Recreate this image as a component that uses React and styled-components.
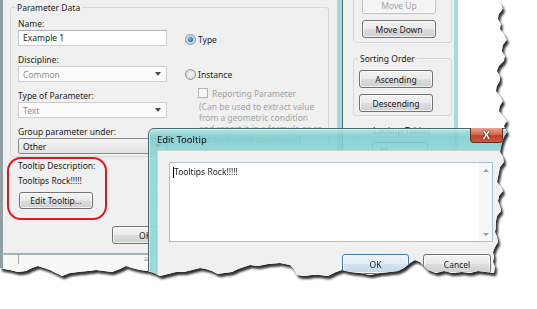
import React from "react";
import styled, { createGlobalStyle } from "styled-components";

const RIGHT_EDGE = [[497,0],[501,4],[503,9],[499,14],[498,19],[501,24],[500,29],[504,34],[507,40],[503,45],[502,51],[505,56],[504,61],[499,66],[497,71],[500,76],[500,81],[497,86],[496,91],[500,96],[503,101],[500,106],[499,111],[503,116],[507,121],[504,126],[507,132],[504,137],[502,142],[501,147],[500,152],[503,157],[504,162],[500,167],[499,172],[498,177],[497,182],[501,187],[503,191],[499,196],[498,201],[500,206],[501,211],[497,216],[496,221],[496,227],[495,232],[497,237],[498,242],[495,247],[493,252],[494,257],[493,262],[495,267],[494,273]];
const BOTTOM_EDGE = [[486,272],[478,271],[470,273],[462,272],[452,273],[444,271],[436,273],[428,270],[424,266],[420,262],[415,260],[410,263],[404,268],[398,271],[390,272],[380,273],[370,275],[360,273],[350,272],[342,270],[336,272],[328,276],[320,275],[312,275],[304,276],[297,275],[293,268],[290,265],[280,263],[268,264],[258,266],[250,265],[244,267],[238,269],[232,272],[224,273],[218,274],[212,271],[206,269],[200,268],[192,270],[184,272],[176,272],[168,274],[160,276],[154,273],[148,271],[140,270],[132,268],[126,266],[120,269],[112,272],[104,271],[96,270],[88,271],[78,272],[70,273],[62,276],[56,273],[50,270],[44,268],[38,266],[32,268],[26,271],[18,272],[10,270],[4,269],[0,268]];
const TORN = ["0px 0px", ...RIGHT_EDGE.concat(BOTTOM_EDGE).map(([x, y]) => `${x}px ${y}px`)].join(", ");

const Global = createGlobalStyle`
  html, body { margin: 0; padding: 0; background: #fff; }
  body { width: 537px; height: 309px; overflow: hidden; font-family: "Noto Sans", "Open Sans", sans-serif; }
  * { box-sizing: border-box; }
`;

const Stage = styled.div`
  width: 537px;
  height: 309px;
  filter: drop-shadow(2px 3px 1.3px rgba(0, 0, 0, 0.82));
`;

const Paper = styled.div`
  position: relative;
  width: 512px;
  height: 282px;
  overflow: hidden;
  background: #fff;
  clip-path: polygon(${TORN});
  font-size: 8.5px;
  color: #1b1b1b;
`;

/* ---------- generic controls ---------- */
const Button = styled.div`
  width: ${(p) => p.$w}px;
  height: ${(p) => p.$h || 18}px;
  display: flex;
  align-items: center;
  justify-content: center;
  font-size: 8.5px;
  color: ${(p) => (p.$disabled ? "#a4a4a4" : "#1b1b1b")};
  border: 1px solid ${(p) => (p.$default ? "#3d80b3" : p.$disabled ? "#bcc0c3" : "#737373")};
  border-radius: 3px;
  background: ${(p) =>
    p.$disabled
      ? "#f4f4f4"
      : p.$default
      ? "linear-gradient(#eef5fa 0%, #e3edf5 48%, #d3e2ee 52%, #c6d8e8 100%)"
      : "linear-gradient(#f3f3f3 0%, #ebebeb 48%, #dddddd 52%, #cfcfcf 100%)"};
  box-shadow: inset 0 0 0 1px rgba(255, 255, 255, 0.7);
  flex: none;
`;

const Label = styled.div`
  line-height: 12px;
  height: 12px;
  white-space: nowrap;
  color: ${(p) => (p.$muted ? "#a2a2a2" : "#1b1b1b")};
`;

const TextBox = styled.div`
  width: 149px;
  height: 16px;
  background: #fff;
  border: 1px solid #c9d0d6;
  border-top-color: #abb1b8;
  padding-left: 4px;
  line-height: 14px;
`;

const Combo = styled.div`
  width: 149px;
  height: 16px;
  display: flex;
  align-items: center;
  justify-content: space-between;
  padding: 0 5px 0 4px;
  border: 1px solid ${(p) => (p.$enabled ? "#8c8c8c" : "#cdcdcd")};
  border-radius: ${(p) => (p.$enabled ? "2px" : "0")};
  background: ${(p) => (p.$enabled ? "linear-gradient(#f4f4f4, #e2e2e2)" : "#fbfbfb")};
  color: ${(p) => (p.$enabled ? "#1b1b1b" : "#8f8f8f")};
`;

const Arrow = styled.span`
  width: 0;
  height: 0;
  border-left: 3.5px solid transparent;
  border-right: 3.5px solid transparent;
  border-top: 4px solid #4d4d4d;
`;

const Field = styled.div`
  display: flex;
  flex-direction: column;
  margin-bottom: ${(p) => (p.$last ? 0 : 8)}px;
`;

const Radio = styled.span`
  width: 11px;
  height: 11px;
  border-radius: 50%;
  border: 1px solid #8d8f90;
  background: radial-gradient(circle at 50% 50%, #f6f6f6, #d6d6d6);
  display: inline-flex;
  align-items: center;
  justify-content: center;
  flex: none;
  &::after {
    content: "";
    display: ${(p) => (p.$checked ? "block" : "none")};
    width: 5px;
    height: 5px;
    border-radius: 50%;
    background: radial-gradient(circle at 40% 35%, #6bbcf2, #0b4c8c);
    box-shadow: 0 0 0 1px #9ad0f2;
  }
`;

const Check = styled.span`
  width: 10px;
  height: 10px;
  border: 1px solid #b4b4b4;
  background: #f5f5f5;
  flex: none;
`;

const OptRow = styled.div`
  display: flex;
  align-items: center;
  gap: ${(p) => p.$gap || 2}px;
  height: 12px;
  margin-top: ${(p) => p.$mt || 0}px;
  margin-left: ${(p) => p.$ml || 0}px;
  white-space: nowrap;
  color: ${(p) => (p.$muted ? "#a2a2a2" : "#1b1b1b")};
`;

const Note = styled.div`
  margin: 2px 0 0 14px;
  line-height: 11px;
  color: #a4a4a4;
  white-space: nowrap;
`;

/* ---------- Parameter Properties window ---------- */
const ParamWindow = styled.div`
  position: absolute;
  left: 0;
  top: -20px;
  width: 342px;
  height: 275px;
  display: flex;
  flex-direction: column;
  border-left: 3px solid #919fa3;
  border-right: 5px solid #a3dbdb;
  border-bottom: 2px solid #9bb5b9;
  box-shadow: 1px 0 0 #56686a;
  z-index: 2;
`;

const ParamClient = styled.div`
  flex: 1;
  background: #f0f0f0;
  padding: 23px 0 0 7px;
  display: flex;
  flex-direction: column;
  align-items: flex-start;
`;

const GroupBox = styled.fieldset`
  margin: 0;
  width: ${(p) => p.$w}px;
  padding: ${(p) => p.$pad};
  border: 1px solid #d3d9dd;
  border-radius: 3px;
  margin-top: ${(p) => p.$mt || 0}px;
  min-width: 0;
`;

const Legend = styled.legend`
  padding: 0 2px;
  margin-left: ${(p) => p.$ml || 0}px;
  line-height: 9px;
  font-size: 8.5px;
  color: #1b1b1b;
`;

const DataGrid = styled.div`
  display: grid;
  grid-template-columns: 149px auto;
  column-gap: 18px;
  padding-top: 6px;
  align-items: start;
`;

const Column = styled.div`
  display: flex;
  flex-direction: column;
`;

const TooltipBox = styled.div`
  margin: 0 0 0 -3px;
  width: 100px;
  border: 2px solid #e5171d;
  border-radius: 14px;
  padding: 1px 0 9px 9px;
  display: flex;
  flex-direction: column;
`;

const TooltipLabel = styled.div`
  line-height: 12px;
  margin-top: ${(p) => p.$mt || 0}px;
  white-space: nowrap;
`;

const ButtonRow = styled.div`
  display: flex;
  gap: ${(p) => p.$gap || 8}px;
  margin: ${(p) => p.$m};
  justify-content: ${(p) => p.$justify || "flex-start"};
  align-self: stretch;
`;

/* ---------- Family Types window (behind) ---------- */
const FamilyWindow = styled.div`
  position: absolute;
  left: 343px;
  top: -30px;
  width: 115px;
  height: 330px;
  background: #f0f0f0;
  border-right: 4px solid #a7dcdc;
  padding-left: 10px;
  display: flex;
  flex-direction: column;
  z-index: 1;
`;

const StackCol = styled.div`
  display: flex;
  flex-direction: column;
  gap: 6px;
`;

/* ---------- Revit palette strip at the bottom ---------- */
const BackPanel = styled.div`
  position: absolute;
  left: 0;
  top: 255px;
  width: 152px;
  height: 30px;
  background: #f8f8f8;
  border-left: 3px solid #939fa2;
  display: flex;
  justify-content: space-between;
  align-items: flex-start;
  padding: 0 3px 0 15px;
  z-index: 0;
`;

const PanelLine = styled.span`
  width: 1px;
  height: 9px;
  background: #a9a9a9;
`;

const Grip = styled.span`
  font-size: 8px;
  line-height: 8px;
  color: #8a8a8a;
`;

/* ---------- Edit Tooltip dialog ---------- */
const Dialog = styled.div`
  position: absolute;
  left: 148px;
  top: 128px;
  width: 366px;
  height: 160px;
  border: 1px solid #48696d;
  border-radius: 6px 6px 0 0;
  padding: 0 8px;
  display: flex;
  flex-direction: column;
  background: linear-gradient(
    180deg,
    rgba(176, 228, 228, 0.92) 0px,
    rgba(126, 204, 205, 0.88) 7px,
    rgba(134, 208, 209, 0.88) 18px,
    rgba(146, 214, 214, 0.94) 24px,
    rgba(150, 216, 216, 0.96) 100%
  );
  box-shadow: inset 1px 1px 0 rgba(255, 255, 255, 0.5);
  z-index: 5;
`;

const TitleBar = styled.div`
  height: 21px;
  display: flex;
  justify-content: space-between;
  align-items: flex-start;
  flex: none;
`;

const Title = styled.div`
  margin-top: 5px;
  font-size: 9.5px;
  line-height: 12px;
  color: #0d0d0d;
`;

const CloseButton = styled.div`
  width: 33px;
  height: 15px;
  margin: -1px 2px 0 0;
  border: 1px solid #6a2a22;
  border-top: none;
  border-radius: 0 0 4px 4px;
  background: linear-gradient(180deg, #e9a493 0%, #d46a53 45%, #c1402a 55%, #cf5a3d 100%);
  display: flex;
  align-items: center;
  justify-content: center;
  color: #fff;
  font-family: "Liberation Sans", Arial, sans-serif;
  font-weight: bold;
  font-size: 11px;
  text-shadow: 0 0 1px #5a1810, 0 0 2px #5a1810;
`;

const DialogBody = styled.div`
  flex: 1;
  background: #f0f0f0;
  border: 1px solid #c1d8d9;
  padding: 11px 11px 0 11px;
  display: flex;
  flex-direction: column;
`;

const TextArea = styled.div`
  height: 80px;
  border: 1px solid #a9c0d6;
  background: #fff;
  display: flex;
`;

const TextContent = styled.div`
  flex: 1;
  padding: 3px 3px;
  line-height: 12px;
  display: flex;
  align-items: flex-start;
  color: #1b1b1b;
`;

const Caret = styled.span`
  width: 1px;
  height: 11px;
  margin-top: 1px;
  background: #000;
`;

const ScrollBar = styled.div`
  width: 13px;
  background: #f7f7f7;
  display: flex;
  flex-direction: column;
  justify-content: space-between;
  align-items: center;
  padding: 6px 0 5px;
`;

const ScrollArrow = styled.span`
  width: 0;
  height: 0;
  border-left: 3px solid transparent;
  border-right: 3px solid transparent;
  ${(p) => (p.$up ? "border-bottom: 3px solid #9a9a9a;" : "border-top: 3px solid #9a9a9a;")}
`;

export default function App() {
  return (
    <>
      <Global />
      <Stage>
        <Paper>
          <BackPanel>
            <PanelLine />
            <Grip>≡</Grip>
          </BackPanel>

          <FamilyWindow>
            <GroupBox $w={99} $mt={6} $pad="19px 0 4px 8px">
              <StackCol>
                <Button $w={74} $disabled>Move Up</Button>
                <Button $w={74}>Move Down</Button>
              </StackCol>
            </GroupBox>
            <GroupBox $w={99} $mt={11} $pad="7px 0 3px 5px">
              <Legend $ml={-1}>Sorting Order</Legend>
              <StackCol>
                <Button $w={74}>Ascending</Button>
                <Button $w={74}>Descending</Button>
              </StackCol>
            </GroupBox>
            <GroupBox $w={99} $mt={10} $pad="7px 0 6px 18px">
              <Legend $ml={-1}>Lookup Tables</Legend>
              <Button $w={56}>Manage...</Button>
            </GroupBox>
          </FamilyWindow>

          <ParamWindow>
            <ParamClient>
              <GroupBox $w={319} $pad="0 7px 2px 7px">
                <Legend $ml={-3}>Parameter Data</Legend>
                <DataGrid>
                  <Column>
                    <Field>
                      <Label>Name:</Label>
                      <TextBox>Example 1</TextBox>
                    </Field>
                    <Field>
                      <Label>Discipline:</Label>
                      <Combo>
                        Common
                        <Arrow />
                      </Combo>
                    </Field>
                    <Field>
                      <Label>Type of Parameter:</Label>
                      <Combo>
                        Text
                        <Arrow />
                      </Combo>
                    </Field>
                    <Field $last>
                      <Label>Group parameter under:</Label>
                      <Combo $enabled>
                        Other
                        <Arrow />
                      </Combo>
                    </Field>
                  </Column>
                  <Column>
                    <OptRow $mt={15}>
                      <Radio $checked />
                      Type
                    </OptRow>
                    <OptRow $mt={23}>
                      <Radio />
                      Instance
                    </OptRow>
                    <OptRow $mt={7} $ml={13} $gap={4} $muted>
                      <Check />
                      Reporting Parameter
                    </OptRow>
                    <Note>
                      (Can be used to extract value
                      <br />
                      from a geometric condition
                      <br />
                      and report it in a formula or as
                      <br />a schedulable parameter)
                    </Note>
                  </Column>
                </DataGrid>
              </GroupBox>

              <TooltipBox>
                <TooltipLabel>Tooltip Description:</TooltipLabel>
                <TooltipLabel $mt={3}>Tooltips Rock!!!!!</TooltipLabel>
                <ButtonRow $m="5px 0 0 1px">
                  <Button $w={74} $h={17}>Edit Tooltip...</Button>
                </ButtonRow>
              </TooltipBox>

              <ButtonRow $m="6px 0 0 102px">
                <Button $w={66}>OK</Button>
                <Button $w={75}>Cancel</Button>
              </ButtonRow>
            </ParamClient>
          </ParamWindow>

          <Dialog>
            <TitleBar>
              <Title>Edit Tooltip</Title>
              <CloseButton>X</CloseButton>
            </TitleBar>
            <DialogBody>
              <TextArea>
                <TextContent>
                  <Caret />
                  Tooltips Rock!!!!!
                </TextContent>
                <ScrollBar>
                  <ScrollArrow $up />
                  <ScrollArrow />
                </ScrollBar>
              </TextArea>
              <ButtonRow $m="12px 2px 0 0" $gap={14} $justify="flex-end">
                <Button $w={67} $h={20} $default>OK</Button>
                <Button $w={68} $h={20}>Cancel</Button>
              </ButtonRow>
            </DialogBody>
          </Dialog>
        </Paper>
      </Stage>
    </>
  );
}
